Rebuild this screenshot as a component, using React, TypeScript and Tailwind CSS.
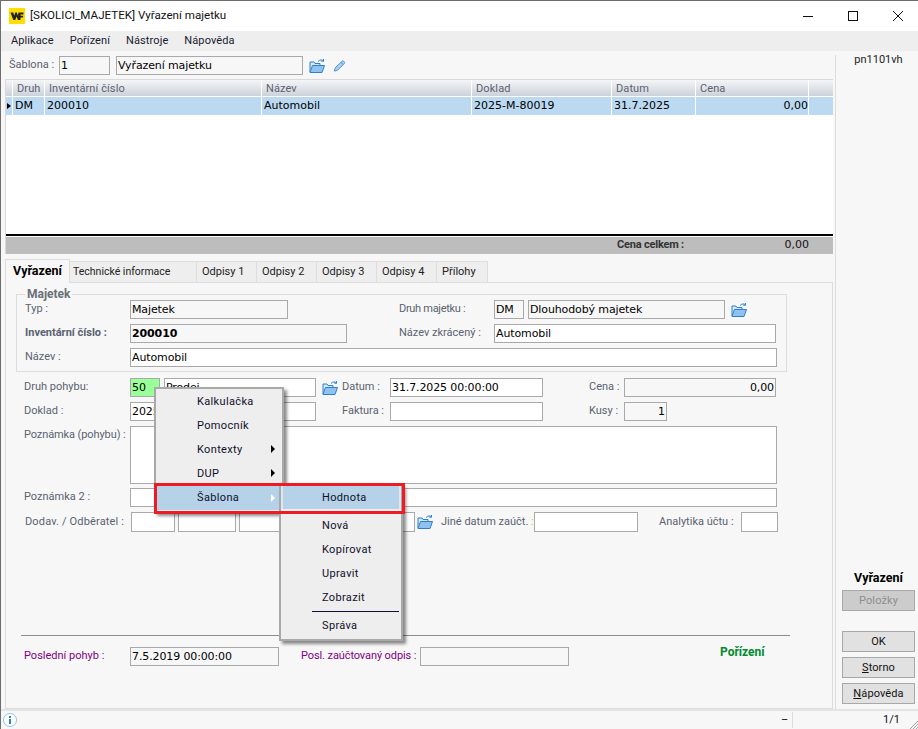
import React from 'react'

const LABEL = "font-['Roboto',sans-serif] text-[11px] text-[#5a6270] whitespace-nowrap"

function Folder({ className = '' }: { className?: string }) {
  return (
    <svg viewBox="0 0 16 16" className={'w-4 h-4 shrink-0 ' + className} fill="none">
      <path d="M1 14V4h4l1 1.500h5V8" stroke="#2f7fd0" strokeWidth="1" fill="#d5e8f8" />
      <path d="M1 14l2.500-6.500H15.500L13 14.500H1z" stroke="#2f7fd0" strokeWidth="1" fill="#8fc2ee" />
      <path d="M9 3.500c2-2 4-2 5.500-.5M14.500 1v2.200h-2.200" stroke="#2f7fd0" strokeWidth="1" />
    </svg>
  )
}

function Pencil() {
  return (
    <svg viewBox="0 0 14 14" className="w-[13px] h-[14px] shrink-0" fill="none">
      <path d="M1.500 12.500l.8-3.300L9.700 1.800a1.200 1.200 0 0 1 1.700 0l.8.8a1.200 1.200 0 0 1 0 1.700L4.800 11.700z" fill="#a9cdf0" stroke="#4a90d9" strokeWidth="1" />
      <path d="M8.500 3l2.500 2.500" stroke="#4a90d9" strokeWidth="1" />
    </svg>
  )
}

function Box({ className = '', children }: { className?: string; children?: React.ReactNode }) {
  return (
    <div className={"h-[19px] shrink-0 border border-[#a9a9a9] px-px leading-[17px] text-[11px] tracking-[-0.12px] text-black font-['DejaVu_Sans',sans-serif] overflow-hidden whitespace-nowrap " + className}>
      {children}
    </div>
  )
}

function MenuItem({ text, arrow, sub, hl }: { text: string; arrow?: boolean; sub?: boolean; hl?: boolean }) {
  return (
    <div className={'h-6 flex items-center relative ' + (hl ? 'bg-[#b5d2e9] ' : '') + (hl && sub ? 'border-x-2 border-[#dfe6ec] pl-[39px]' : 'pl-[41px]')}>
      <span className={"font-['Roboto',sans-serif] text-[11px] tracking-[0.35px] text-[#10102a] " + (hl && !sub ? '' : 'mt-[2px]')}>{text}</span>
      {arrow && (
        <span className={'absolute left-[115px] top-[8px] w-0 h-0 border-y-[4px] border-y-transparent border-l-[4px] ' + (hl ? 'border-l-white' : 'border-l-black')} />
      )}
    </div>
  )
}

const columns = [
  { w: 'w-[32px]', head: 'Druh', cell: 'DM' },
  { w: 'w-[217px]', head: 'Inventární číslo', cell: '200010' },
  { w: 'w-[210px]', head: 'Název', cell: 'Automobil' },
  { w: 'w-[140px]', head: 'Doklad', cell: '2025-M-80019' },
  { w: 'w-[84px]', head: 'Datum', cell: '31.7.2025' },
  { w: 'w-[113px]', head: 'Cena', cell: '0,00', right: true },
]

const tabs = [
  { w: 'w-[127px] pl-[3px] text-[10.5px]', text: 'Technické informace' },
  { w: 'w-[60px] pl-[5px] text-[11px]', text: 'Odpisy 1' },
  { w: 'w-[60px] pl-[5px] text-[11px]', text: 'Odpisy 2' },
  { w: 'w-[60px] pl-[5px] text-[11px]', text: 'Odpisy 3' },
  { w: 'w-[60px] pl-[5px] text-[11px]', text: 'Odpisy 4' },
  { w: 'w-[51px] pl-[5px] text-[11px]', text: 'Přílohy' },
]

function SideButton({ children, className = '' }: { children: React.ReactNode; className?: string }) {
  return (
    <div className={"w-[73px] h-[21px] pt-px border border-[#a8a8a8] bg-[#e1e1e1] flex items-center justify-center font-['Roboto',sans-serif] text-[11px] tracking-[0.1px] text-[#111] " + className}>
      {children}
    </div>
  )
}

export default function App() {
  return (
    <div className="relative w-[918px] h-[729px] overflow-hidden bg-[#f7f7f7] flex flex-col border-t border-[#6d6d6d] border-l border-l-[#6d6d6d]">
      {/* title bar */}
      <div className="h-[30px] bg-white flex items-center shrink-0">
        <div className="ml-2 w-4 h-4 bg-[#ffdd00] flex items-center justify-center">
          <svg viewBox="0 0 16 16" className="w-4 h-4">
            <path d="M1.500 4.500h2.800l.9 3.200L6.300 4.500h1.600l1 3.200.6-3.200h5v2h-3v1.200h2.600v1.800h-2.600V12H9l-1.400-3.500L6.200 12H4.300z" fill="#222" />
          </svg>
        </div>
        <span className="ml-[5px] font-['Roboto',sans-serif] text-[11.6px] text-[#111]">[SKOLICI_MAJETEK] Vyřazení majetku</span>
        <div className="ml-auto flex items-center">
          <svg viewBox="0 0 10 10" className="w-[10px] h-[10px] mr-[35px]"><path d="M0 5.500h10" stroke="#111" /></svg>
          <svg viewBox="0 0 10 10" className="w-[10px] h-[10px] mr-[35px]"><rect x="0.500" y="0.500" width="9" height="9" fill="none" stroke="#111" /></svg>
          <svg viewBox="0 0 10 10" className="w-[10px] h-[10px] mr-[15px]"><path d="M0 0l10 10M10 0L0 10" stroke="#111" /></svg>
        </div>
      </div>
      {/* menu bar */}
      <div className="h-5 bg-[#eeeeee] flex items-center gap-4 pl-[10px] shrink-0 font-['Roboto',sans-serif] text-[11px] tracking-[0.1px] text-[#1a1a2e]">
        <span>Aplikace</span>
        <span>Pořízení</span>
        <span>Nástroje</span>
        <span>Nápověda</span>
      </div>

      <div className="flex flex-1 min-h-0">
        <div className="w-[834px] shrink-0 flex flex-col">
          {/* template row */}
          <div className="h-[28px] flex items-center pl-2 shrink-0 pt-px">
            <span className={LABEL + ' w-[50px]'}>Šablona :</span>
            <Box className="w-[51px]">1</Box>
            <Box className="w-[187px] ml-[6px]">Vyřazení majetku</Box>
            <Folder className="ml-[6px]" />
            <div className="ml-2"><Pencil /></div>
          </div>

          {/* table */}
          <div className="ml-1 w-[828px] h-[175px] shrink-0 flex flex-col border-t border-l border-[#d9d9d9] bg-white">
            <div className="h-[17px] flex bg-gradient-to-b from-[#f4f5f7] to-[#cdd2da] border-b border-white shrink-0">
              <div className="w-[7px] border-r border-white" />
              {columns.map((c) => (
                <div key={c.head} className={c.w + " border-r border-white pl-1 leading-[17px] font-['Roboto',sans-serif] text-[11px] tracking-[0.1px] text-[#5a6270]"}>{c.head}</div>
              ))}
            </div>
            <div className="h-[19px] flex bg-[#bbdaf2] shrink-0 border-b border-white">
              <div className="w-[7px] border-r border-white relative">
                <span className="absolute left-[1px] top-[6px] w-0 h-0 border-y-[3px] border-y-transparent border-l-[4px] border-l-black" />
              </div>
              {columns.map((c) => (
                <div key={c.head} className={c.w + " border-r border-white " + (c.right ? 'text-right' : 'pl-[2px]') + " leading-[17px] font-['DejaVu_Sans',sans-serif] text-[11px] text-black"}>{c.cell}</div>
              ))}
            </div>
            <div className="flex-1" />
            <div className="h-[2px] bg-black shrink-0" />
            <div className="h-[17px] mt-px bg-[#bdbdbd] flex items-center shrink-0">
              <span className="ml-[611px] font-['Roboto',sans-serif] font-bold text-[11px] tracking-[-0.2px] text-[#333]">Cena celkem :</span>
              <span className="ml-auto mr-[24px] font-['DejaVu_Sans',sans-serif] text-[11px] text-[#111]">0,00</span>
            </div>
          </div>

          {/* tabs */}
          <div className="ml-1 mt-1 h-6 flex items-end shrink-0 relative z-10">
            <div className="w-[65px] h-6 bg-[#f7f7f7] border-t border-x border-[#dddddd] flex items-center justify-center font-['Roboto',sans-serif] font-bold text-[12.5px] text-black -mb-px">Vyřazení</div>
            {tabs.map((t) => (
              <div key={t.text} className={t.w + " h-[21px] bg-[#eeeeee] border-r border-t border-[#dddddd] flex items-center font-['Roboto',sans-serif] text-[#222]"}>{t.text}</div>
            ))}
          </div>

          {/* form panel */}
          <div className="ml-1 w-[828px] flex-1 min-h-0 border border-[#dddddd] pl-[10px] pt-[7px] flex flex-col">
            <fieldset className="w-[771px] h-[82px] border border-[#dddddd] pl-2 shrink-0 relative">
              <legend className="px-[2px] font-['Roboto',sans-serif] font-bold text-[12px] leading-[8px] text-[#6a7078]">Majetek</legend>
              <div className="flex flex-col gap-[5px] mt-[2px]">
                <div className="flex items-center h-[19px]">
                  <span className={LABEL + ' w-[105px]'}>Typ :</span>
                  <Box className="w-[158px]">Majetek</Box>
                  <span className={LABEL + ' ml-[111px] w-[95px] !tracking-[-0.3px]'}>Druh majetku :</span>
                  <Box className="w-[30px]">DM</Box>
                  <Box className="w-[197px] ml-1">Dlouhodobý majetek</Box>
                  <Folder className="ml-[6px]" />
                </div>
                <div className="flex items-center h-[19px]">
                  <span className={LABEL + ' w-[105px] font-bold'}>Inventární číslo :</span>
                  <Box className="w-[217px] font-bold">200010</Box>
                  <span className={LABEL + ' ml-[52px] w-[95px]'}>Název zkrácený :</span>
                  <Box className="w-[282px] bg-white">Automobil</Box>
                </div>
                <div className="flex items-center h-[19px]">
                  <span className={LABEL + ' w-[105px]'}>Název :</span>
                  <Box className="w-[647px] bg-white">Automobil</Box>
                </div>
              </div>
            </fieldset>

            <div className="ml-2 mt-[6px] flex flex-col gap-[5px] shrink-0">
              <div className="flex items-center h-[19px]">
                <span className={LABEL + ' w-[106px]'}>Druh pohybu:</span>
                <Box className="w-[30px] bg-[#99ff99]">50</Box>
                <Box className="w-[152px] ml-1 bg-white">Prodej</Box>
                <Folder className="ml-[6px]" />
                <span className={LABEL + ' ml-1 w-[48px]'}>Datum :</span>
                <Box className="w-[153px] bg-white">31.7.2025 00:00:00</Box>
                <span className={LABEL + ' ml-[46px] w-[35px]'}>Cena :</span>
                <Box className="w-[152px] text-right">0,00</Box>
              </div>
              <div className="flex items-center h-[19px]">
                <span className={LABEL + ' w-[106px]'}>Doklad :</span>
                <Box className="w-[186px] bg-white">2025-M-80019</Box>
                <span className={LABEL + ' ml-[26px] w-[48px]'}>Faktura :</span>
                <Box className="w-[153px] bg-white" />
                <span className={LABEL + ' ml-[46px] w-[35px]'}>Kusy :</span>
                <Box className="w-[43px] text-right">1</Box>
              </div>
              <div className="flex h-[58px]">
                <span className={LABEL + ' w-[106px] pt-px !tracking-[-0.1px]'}>Poznámka (pohybu) :</span>
                <div className="w-[647px] h-[58px] border border-[#a9a9a9] bg-white" />
              </div>
              <div className="flex items-center h-[19px] -mt-px">
                <span className={LABEL + ' w-[106px]'}>Poznámka 2 :</span>
                <Box className="w-[647px] bg-white" />
              </div>
              <div className="flex items-center h-[20px]">
                <span className={LABEL + ' w-[107px] pl-px !tracking-[0.15px]'}>Dodav. / Odběratel :</span>
                <Box className="w-[44px] !h-5 bg-white" />
                <Box className="w-[58px] !h-5 ml-[3px] bg-white" />
                <Box className="w-[176px] !h-5 ml-[3px] bg-white" />
                <Folder className="ml-[2px]" />
                <span className={LABEL + ' ml-2 w-[93px]'}>Jiné datum zaúčt. <span className="text-[#e8b060]">:</span></span>
                <Box className="w-[104px] !h-5 bg-white" />
                <span className={LABEL + ' ml-[21px] w-[82px]'}>Analytika účtu :</span>
                <Box className="w-[37px] !h-5 bg-white" />
              </div>
            </div>

            <div className="w-[769px] ml-[5px] h-px bg-[#8c8c8c] mt-[103px] shrink-0" />
            <div className="ml-2 mt-[11px] flex items-center h-[19px] shrink-0">
              <span className={LABEL + ' w-[106px] !text-[#800080]'}>Poslední pohyb :</span>
              <Box className="w-[149px]">7.5.2019 00:00:00</Box>
              <span className={LABEL + ' ml-[22px] w-[119px] !tracking-[-0.1px] !text-[#800080]'}>Posl. zaúčtovaný odpis :</span>
              <Box className="w-[149px]" />
              <span className="ml-[151px] -mt-[10px] font-['Roboto',sans-serif] font-bold text-[12px] text-[#008a2e]">Pořízení</span>
            </div>
          </div>
        </div>

        {/* right column */}
        <div className="flex-1 border-l border-[#dddddd] mt-[4px] pl-[3px] flex flex-col items-center">
          <span className="leading-[9px] font-['Roboto',sans-serif] text-[11px] text-[#222]">pn1101vh</span>
          <span className="mt-auto font-['Roboto',sans-serif] font-bold text-[12.5px] text-black">Vyřazení</span>
          <SideButton className="!text-[#8e8e8e] !bg-[#cccccc] mt-[2px]">Položky</SideButton>
          <SideButton className="mt-[20px]">OK</SideButton>
          <SideButton className="mt-[5px]"><span><span className="underline">S</span>torno</span></SideButton>
          <SideButton className="mt-[5px] mb-[5px]"><span><span className="underline">N</span>ápověda</span></SideButton>
        </div>
      </div>

      {/* status bar */}
      <div className="h-[20px] shrink-0 border-t-2 border-[#e4e4e4] flex items-center relative font-['Roboto',sans-serif] text-[11px] text-[#111]">
        <svg viewBox="0 0 14 14" className="ml-[2px] w-[14px] h-[14px]">
          <circle cx="7" cy="7" r="6.500" fill="#fff" stroke="#8ec4ee" />
          <rect x="6" y="3" width="2" height="2" fill="#2f7fd0" />
          <rect x="6" y="6" width="2" height="5" fill="#2f7fd0" />
        </svg>
        <span className="ml-auto">–</span>
        <div className="ml-[4px] w-px h-4 bg-[#dddddd]" />
        <span className="ml-[90px] mr-[18px]">1/1</span>
        <svg viewBox="0 0 9 9" className="absolute right-0 bottom-0 w-[9px] h-[9px]">
          <path d="M9 1L1 9M9 4L4 9M9 7L7 9" stroke="#a0a0a0" fill="none" />
        </svg>
      </div>

      {/* context menus */}
      <div className="absolute left-[153px] top-[386px] w-[130px] h-[126px] bg-[#eeeeee] border-2 border-[#a9a9a9] border-b-0 shadow-[3px_3px_3px_rgba(0,0,0,0.45)]">
        <MenuItem text="Kalkulačka" />
        <MenuItem text="Pomocník" />
        <MenuItem text="Kontexty" arrow />
        <MenuItem text="DUP" arrow />
        <div className="mt-px"><MenuItem text="Šablona" arrow hl /></div>
      </div>
      <div className="absolute left-[278px] top-[484px] w-[124px] h-[156px] bg-[#eeeeee] border-2 border-t-0 border-[#a9a9a9] shadow-[3px_3px_3px_rgba(0,0,0,0.45)]">
        <MenuItem text="Hodnota" hl sub />
        <div className="h-1" />
        <MenuItem text="Nová" sub />
        <MenuItem text="Kopírovat" sub />
        <MenuItem text="Upravit" sub />
        <MenuItem text="Zobrazit" sub />
        <div className="ml-[31px] mr-[2px] mt-[2px] mb-[1px] h-px bg-[#101040]" />
        <MenuItem text="Správa" sub />
      </div>
      <div className="absolute left-[153px] top-[482px] w-[251px] h-[31px] border-[3px] border-[#ed1c24]" />
    </div>
  )
}
